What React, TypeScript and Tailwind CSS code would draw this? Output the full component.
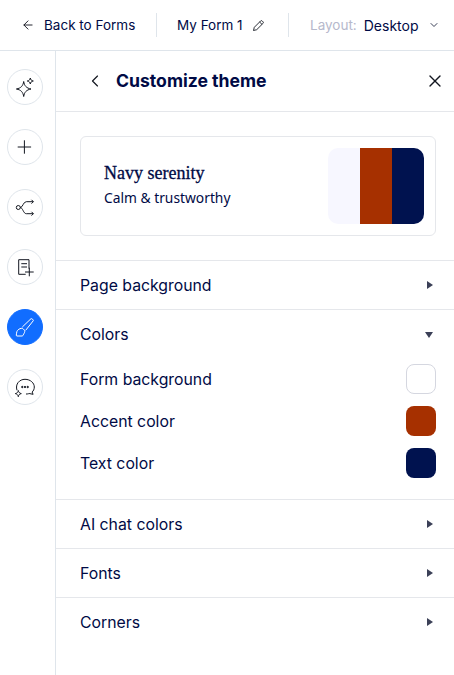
import { ArrowLeft, ChevronDown, ChevronLeft, X } from "lucide-react";
import type { ReactNode } from "react";

const ink = "text-[#000a45]";

function Rail({ children, active }: { children: ReactNode; active?: boolean }) {
  return (
    <div className={`w-9 h-9 rounded-full flex items-center justify-center border ${active ? "bg-[#116dff] border-[#116dff] text-white" : "bg-white border-[#dfe5eb] text-[#131720]"}`}>
      <svg width="34" height="34" viewBox="1 1 34 34" fill="none" stroke="currentColor" strokeWidth="1" strokeLinejoin="round">
        {children}
      </svg>
    </div>
  );
}

function Label({ children, up }: { children: ReactNode; up?: boolean }) {
  return <span className={`text-[15.8px] leading-[24px] ${up ? "" : "translate-y-[1px]"} ${ink}`}>{children}</span>;
}

function Section({ label, last }: { label: string; last?: boolean }) {
  return (
    <div className={`h-[49px] flex items-center justify-between pl-6 pr-[20px] ${last ? "" : "border-b border-[#e5e7eb]"}`}>
      <Label up={last}>{label}</Label>
      <svg width="8" height="10" viewBox="0 0 8 10" className={last ? "-translate-y-[1px]" : ""}><path d="M1 1l6 4-6 4z" fill="#3b4057" /></svg>
    </div>
  );
}

function ColorRow({ label, bg }: { label: string; bg: string }) {
  return (
    <div className="h-[30px] flex items-center justify-between">
      <Label>{label}</Label>
      <span className={`w-[30px] h-[30px] rounded-[8px] ${bg}`} />
    </div>
  );
}

export default function App() {
  return (
    <div className="w-[454px] h-[675px] bg-white flex flex-col overflow-hidden font-['Inter','Noto_Sans',sans-serif]">
      <header className="h-[51px] shrink-0 border-b border-[#dfe5eb] flex items-center">
        <div className="w-[157px] h-[24px] border-r border-[#dfe5eb] flex items-center pl-[21px] gap-[9px]">
          <ArrowLeft size={14} strokeWidth={1.6} className="text-[#131720]" />
          <span className="text-[13.5px] text-[#000a45]">Back to Forms</span>
        </div>
        <div className="w-[132px] h-[24px] border-r border-[#dfe5eb] flex items-center pl-[20px] gap-[9px]">
          <span className="text-[13.5px] text-[#000a45]">My Form 1</span>
          <svg width="13" height="13" viewBox="0 0 13 13" fill="none" stroke="#131720" strokeWidth="0.9" strokeLinejoin="round">
            <path d="M1.500 11.500l.8-3.200L8.700 1.900c.4-.4 1-.4 1.400 0l1 1c.4.4.4 1 0 1.400L4.700 10.700zM7.600 3l2.400 2.400" />
          </svg>
        </div>
        <div className="flex items-center pl-[21px]">
          <span className="text-[13.5px] text-[#b6b9cc]">Layout:</span>
          <span className="text-[14px] text-[#000a45] ml-[7px]">Desktop</span>
          <ChevronDown size={12} strokeWidth={2} className="text-[#3b4057] ml-[10px]" />
        </div>
      </header>
      <div className="flex flex-1 min-h-0">
        <nav className="w-[56px] shrink-0 border-r border-[#dfe5eb] flex flex-col items-center gap-6 pt-[18px] pr-[5px]">
          <Rail>
            <path d="M16.700 12.500c.7 4.300 2.600 6.600 7.300 7.500-4.700.9-6.600 3.200-7.300 7.500-.7-4.300-2.600-6.600-7.300-7.500 4.700-.9 6.600-3.200 7.300-7.500z" />
            <path d="M23.300 9c.3 1.800 1.200 2.700 3 3-1.800.3-2.700 1.200-3 3-.3-1.800-1.200-2.700-3-3 1.800-.3 2.700-1.200 3-3z" />
          </Rail>
          <Rail>
            <path d="M10.700 18h13.400M17.400 11.300v13.400" />
          </Rail>
          <Rail>
            <circle cx="11.300" cy="18.500" r="2" />
            <path d="M13.300 18.500c2.500 0 3-5.800 6-5.800h7M13.300 18.500c2.500 0 3 6.200 6 6.200h7M24.500 10.800l1.900 1.900-1.900 1.900M24.500 22.800l1.900 1.900-1.900 1.900" />
          </Rail>
          <Rail>
            <path d="M18.700 25.300h-7V10.700h10.300v9M14.300 14.700H20M14.300 18H20M18 23h8.700M22.300 18.700v8.600" />
          </Rail>
          <Rail active>
            <path d="M15.300 18L24 9.700c.6-.5 2.800 1.300 2.300 2L18.700 21.300" />
            <path d="M13 19.700c1.500-.6 2.500-.6 3 0l1.300 1.300c.7.7.6 2-.2 3.300-.6 1-1.200 2.700-1.800 2.700H10c-.6 0-.8-.4-.7-1 .3-1.200.2-2.400.6-3.500.4-1.200 1.800-2.300 3.100-2.800z" />
          </Rail>
          <Rail>
            <path d="M10 21.300C8 15 12.500 10.300 18 10.300s9.300 3.800 9.300 7.700c0 2.300-.9 3.900-2.200 5l1 2.300-4-.8c-1 .4-1.500.5-3.100.5" />
            <circle cx="15.300" cy="18" r=".7" fill="currentColor" />
            <circle cx="18" cy="18" r=".7" fill="currentColor" />
            <circle cx="20.700" cy="18" r=".7" fill="currentColor" />
            <path d="M11.300 21.500c.3 1.800 1.200 2.700 3 3.100-1.800.4-2.700 1.300-3 3.100-.3-1.800-1.200-2.700-3-3.100 1.800-.4 2.700-1.300 3-3.100z" />
          </Rail>
        </nav>
        <main className="flex-1 min-w-0">
          <div className="h-[61px] border-b border-[#e5e7eb] flex items-center pl-[29px] pr-[9px]">
            <ChevronLeft size={20} strokeWidth={1.4} className="text-[#131720]" />
            <h1 className="ml-[11px] text-[17.6px] font-bold text-[#000a45]">Customize theme</h1>
            <X size={20} strokeWidth={1.6} className="ml-auto text-[#131720]" />
          </div>
          <div className="h-[149px] border-b border-[#e5e7eb] pl-6 pr-[18px] pt-6">
            <div className="h-[100px] border border-[#e5e7eb] rounded-[6px] flex items-center justify-between pl-[23px] pr-[11px]">
              <div className="-translate-y-[1px]">
                <div className="font-['Liberation_Serif',serif] text-[18px] leading-[24px] text-[#000a45] [-webkit-text-stroke:0.3px_#000a45]">Navy serenity</div>
                <div className="font-['Noto_Sans',sans-serif] text-[13.8px] leading-[22px] text-[#000a45] mt-[2px]">Calm &amp; trustworthy</div>
              </div>
              <div className="flex w-[96px] h-[76px] rounded-[10px] overflow-hidden">
                <div className="flex-1 bg-[#f7f7ff]" />
                <div className="flex-1 bg-[#a63000]" />
                <div className="flex-1 bg-[#00124f]" />
              </div>
            </div>
          </div>
          <Section label="Page background" />
          <div className="h-[190px] border-b border-[#e5e7eb] pl-6 pr-[18px]">
            <div className="h-[49px] flex items-center justify-between pr-[2px]">
              <Label up>Colors</Label>
              <svg width="10" height="8" viewBox="0 0 10 8"><path d="M1 1h8L5 7z" fill="#3b4057" /></svg>
            </div>
            <div className="flex flex-col gap-3 pt-[5px]">
              <ColorRow label="Form background" bg="bg-white border border-[#d5d7e0]" />
              <ColorRow label="Accent color" bg="bg-[#a63000]" />
              <ColorRow label="Text color" bg="bg-[#00124f]" />
            </div>
          </div>
          <Section label="AI chat colors" />
          <Section label="Fonts" />
          <Section label="Corners" last />
        </main>
      </div>
    </div>
  );
}
